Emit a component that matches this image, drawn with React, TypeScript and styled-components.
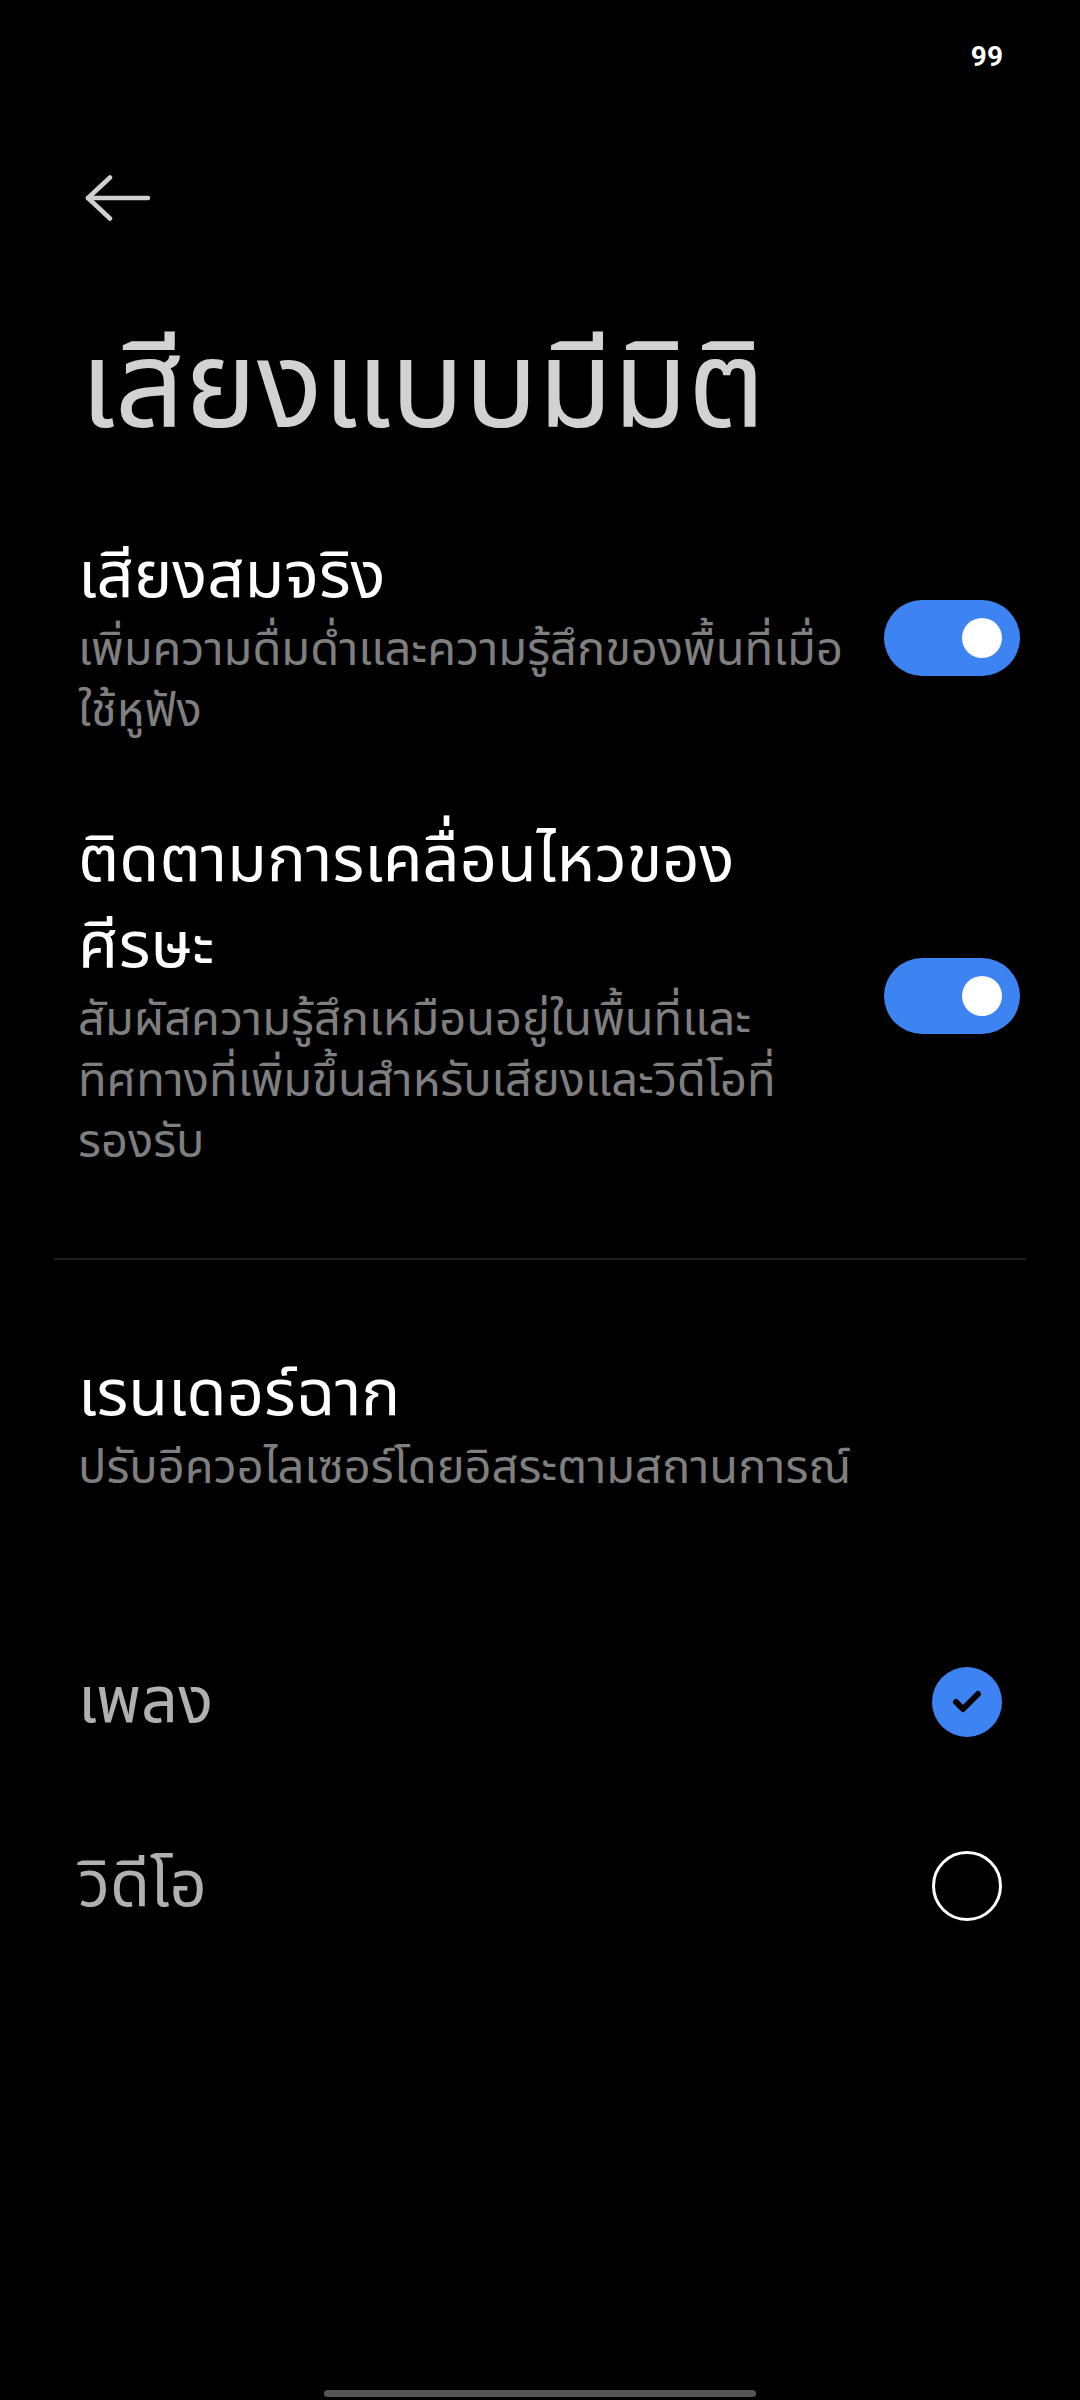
import React, { useState } from 'react';
import styled, { createGlobalStyle } from 'styled-components';

const GlobalStyle = createGlobalStyle`
  html, body {
    margin: 0;
    padding: 0;
    background: #000;
  }
  body {
    font-family: "Noto Sans Thai", "Noto Sans", "DejaVu Sans", sans-serif;
  }
`;

const Screen = styled.div`
  width: 1080px;
  min-height: 2400px;
  background: #000;
  display: flex;
  flex-direction: column;
  box-sizing: border-box;
`;

const StatusBar = styled.div`
  height: 110px;
  display: flex;
  justify-content: flex-end;
  align-items: flex-start;
  padding: 40px 77px 0 0;
  box-sizing: border-box;
  color: #fff;
  font-family: "Roboto", sans-serif;
  font-weight: 700;
  font-size: 28px;
`;

const BackButton = styled.button`
  width: 80px;
  height: 80px;
  margin-left: 85px;
  margin-top: 48px;
  padding: 0;
  border: none;
  background: transparent;
  display: flex;
  align-items: center;
  color: #d0d0d0;
`;

const PageTitle = styled.h1`
  margin: 0;
  padding: 77px 78px 0 80px;
  font-weight: 400;
  font-size: 122px;
  line-height: 150px;
  color: #d2d2d2;
`;

const SwitchRow = styled.div<{ $top: number }>`
  display: flex;
  align-items: center;
  gap: 30px;
  padding: ${p => p.$top}px 60px 0 78px;
`;

const TextCol = styled.div`
  flex: 1;
  display: flex;
  flex-direction: column;
`;

const ItemTitle = styled.div`
  font-size: 65px;
  line-height: 86px;
  color: #fff;
`;

const ItemSub = styled.div`
  font-size: 47px;
  line-height: 61px;
  color: #7f7f7f;
`;

const Toggle = styled.button<{ $on: boolean }>`
  flex-shrink: 0;
  width: 136px;
  height: 76px;
  border-radius: 38px;
  border: none;
  padding: 0 18px;
  display: flex;
  align-items: center;
  justify-content: ${p => (p.$on ? 'flex-end' : 'flex-start')};
  background: ${p => (p.$on ? '#3d83f1' : '#444')};
`;

const Knob = styled.span`
  width: 40px;
  height: 40px;
  border-radius: 50%;
  background: #fff;
`;

const Divider = styled.hr`
  margin: 85px 54px 0;
  border: none;
  height: 2px;
  background: #1f1f1f;
`;

const SceneBlock = styled.div`
  padding: 92px 78px 0;
  display: flex;
  flex-direction: column;
`;

const RadioList = styled.div`
  padding-top: 111px;
  display: flex;
  flex-direction: column;
`;

const RadioRow = styled.div`
  height: 184px;
  display: flex;
  align-items: center;
  justify-content: space-between;
  padding: 0 78px;
`;

const RadioLabel = styled.div`
  font-size: 65px;
  line-height: 86px;
  color: #b0b0b0;
`;

const Radio = styled.span<{ $checked: boolean }>`
  width: 70px;
  height: 70px;
  border-radius: 50%;
  box-sizing: border-box;
  display: flex;
  align-items: center;
  justify-content: center;
  background: ${p => (p.$checked ? '#3d83f1' : 'transparent')};
  border: ${p => (p.$checked ? 'none' : '3px solid #fff')};
`;

const HomeBar = styled.div`
  margin: auto auto 3px;
  width: 432px;
  height: 7px;
  border-radius: 4px;
  background: #555;
`;

const switches = [
  {
    title: 'เสียงสมจริง',
    sub: 'เพิ่มความดื่มด่ำและความรู้สึกของพื้นที่เมื่อใช้หูฟัง',
    top: 69,
  },
  {
    title: 'ติดตามการเคลื่อนไหวของศีรษะ',
    sub: 'สัมผัสความรู้สึกเหมือนอยู่ในพื้นที่และทิศทางที่เพิ่มขึ้นสำหรับเสียงและวิดีโอที่รองรับ',
    top: 76,
  },
];

export default function App() {
  const [on, setOn] = useState([true, true]);
  const [mode, setMode] = useState('music');

  return (
    <Screen>
      <GlobalStyle />
      <StatusBar>99</StatusBar>
      <BackButton>
        <svg width="66" height="46" viewBox="0 0 66 46" fill="none" stroke="currentColor" strokeWidth="4.5" strokeLinecap="round" strokeLinejoin="round">
          <path d="M25 2.5 L3 23 L25 43.5" />
          <path d="M3 23 H63" />
        </svg>
      </BackButton>
      <PageTitle>เสียงแบบมีมิติ</PageTitle>

      {switches.map((s, i) => (
        <SwitchRow key={s.title} $top={s.top}>
          <TextCol>
            <ItemTitle>{s.title}</ItemTitle>
            <ItemSub>{s.sub}</ItemSub>
          </TextCol>
          <Toggle $on={on[i]} onClick={() => setOn(on.map((v, j) => (j === i ? !v : v)))}>
            <Knob />
          </Toggle>
        </SwitchRow>
      ))}

      <Divider />

      <SceneBlock>
        <ItemTitle>เรนเดอร์ฉาก</ItemTitle>
        <ItemSub>ปรับอีควอไลเซอร์โดยอิสระตามสถานการณ์</ItemSub>
      </SceneBlock>

      <RadioList>
        {[
          { id: 'music', label: 'เพลง' },
          { id: 'video', label: 'วิดีโอ' },
        ].map(r => (
          <RadioRow key={r.id} onClick={() => setMode(r.id)}>
            <RadioLabel>{r.label}</RadioLabel>
            <Radio $checked={mode === r.id}>
              {mode === r.id && (
                <svg width="30" height="24" viewBox="0 0 30 24" fill="none" stroke="#000" strokeWidth="6" strokeLinecap="round" strokeLinejoin="round">
                  <path d="M4 12 L11 19 L26 4" />
                </svg>
              )}
            </Radio>
          </RadioRow>
        ))}
      </RadioList>

      <HomeBar />
    </Screen>
  );
}
